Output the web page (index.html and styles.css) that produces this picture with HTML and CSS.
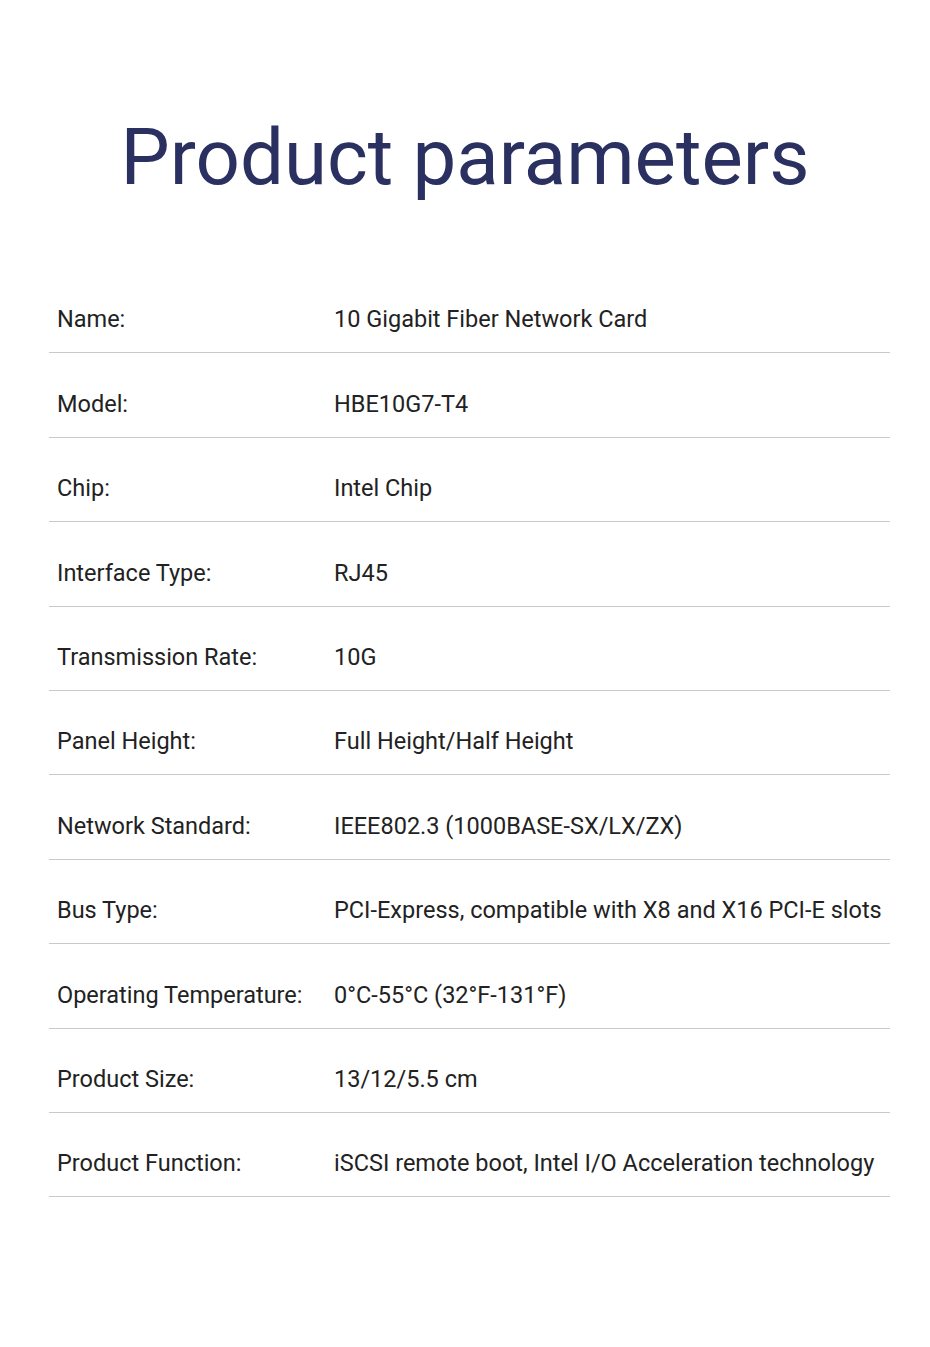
FILE: index.html
```html
<!DOCTYPE html>
<html lang="en">
<head>
<meta charset="utf-8">
<title>Product parameters</title>
<link rel="stylesheet" href="styles.css">
</head>
<body>
<main class="page">
  <h1 class="title">Product parameters</h1>
  <div class="params">
    <div class="row"><div class="label">Name:</div><div class="value">10 Gigabit Fiber Network Card</div></div>
    <div class="row"><div class="label">Model:</div><div class="value">HBE10G7-T4</div></div>
    <div class="row"><div class="label">Chip:</div><div class="value">Intel Chip</div></div>
    <div class="row"><div class="label">Interface Type:</div><div class="value">RJ45</div></div>
    <div class="row"><div class="label">Transmission Rate:</div><div class="value">10G</div></div>
    <div class="row"><div class="label">Panel Height:</div><div class="value">Full Height/Half Height</div></div>
    <div class="row"><div class="label">Network Standard:</div><div class="value">IEEE802.3 (1000BASE-SX/LX/ZX)</div></div>
    <div class="row"><div class="label">Bus Type:</div><div class="value">PCI-Express, compatible with X8 and X16 PCI-E slots</div></div>
    <div class="row"><div class="label">Operating Temperature:</div><div class="value">0°C-55°C (32°F-131°F)</div></div>
    <div class="row"><div class="label">Product Size:</div><div class="value">13/12/5.5 cm</div></div>
    <div class="row"><div class="label">Product Function:</div><div class="value">iSCSI remote boot, Intel I/O Acceleration technology</div></div>
  </div>
</main>
</body>
</html>
```
FILE: styles.css
```css
html, body {
  margin: 0;
  padding: 0;
  background: #ffffff;
}
.page {
  width: 930px;
  min-height: 1347px;
  font-family: Roboto, "Noto Sans", sans-serif;
  color: #222222;
}
.title {
  margin: 0;
  padding-top: 108px;
  text-align: center;
  font-weight: 400;
  font-size: 78px;
  line-height: 100px;
  color: #2a3060;
  letter-spacing: 0;
}
.params {
  margin: 61px 40px 0 49px;
}
.row {
  display: flex;
  align-items: flex-end;
  height: 84.4px;
  padding-bottom: 19px;
  box-sizing: border-box;
  border-bottom: 1.5px solid #c9c9c9;
  font-size: 23.5px;
  line-height: 28px;
}
.label {
  width: 285px;
  padding-left: 8px;
  box-sizing: border-box;
  flex: none;
}
.value {
  flex: 1;
}
```
